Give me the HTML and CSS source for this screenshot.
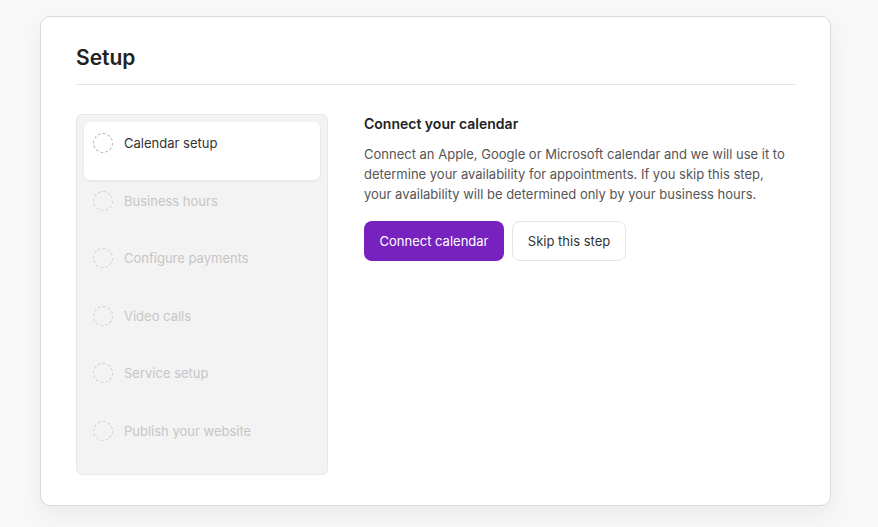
FILE: index.html
```html
<!DOCTYPE html>
<html>
<head>
<meta charset="utf-8">
<link rel="stylesheet" href="styles.css">
</head>
<body>
<div class="card">
  <h1 class="title">Setup</h1>
  <div class="content">
    <ul class="steps">
      <li class="step active"><span class="dot"></span><span>Calendar setup</span></li>
      <li class="step"><span class="dot"></span><span>Business hours</span></li>
      <li class="step"><span class="dot"></span><span>Configure payments</span></li>
      <li class="step"><span class="dot"></span><span>Video calls</span></li>
      <li class="step"><span class="dot"></span><span>Service setup</span></li>
      <li class="step"><span class="dot"></span><span>Publish your website</span></li>
    </ul>
    <div class="panel">
      <h2 class="panel-title">Connect your calendar</h2>
      <p class="panel-text">Connect an Apple, Google or Microsoft calendar and we will use it to determine your availability for appointments. If you skip this step, your availability will be determined only by your business hours.</p>
      <div class="actions">
        <button class="btn btn-primary">Connect calendar</button>
        <button class="btn btn-secondary">Skip this step</button>
      </div>
    </div>
  </div>
</div>
</body>
</html>
```
FILE: styles.css
```css
html, body {
  margin: 0;
  padding: 0;
}
body {
  background: #f8f8f8;
  font-family: Inter, "Noto Sans", sans-serif;
  color: #222;
  padding: 16px 47px 22px 40px;
  height: 527px;
  box-sizing: border-box;
}
.card {
  background: #fff;
  border: 1px solid #d9d9d9;
  border-radius: 10px;
  box-shadow: 0 10px 24px rgba(0,0,0,0.06);
  padding: 26px 35px 29px 35px;
  height: 490px;
  box-sizing: border-box;
}
.title {
  margin: 0;
  font-size: 21px;
  font-weight: 600;
  line-height: 30px;
  padding-bottom: 11px;
  border-bottom: 1px solid #e6e6e6;
  color: #222;
}
.content {
  display: flex;
  gap: 36px;
  margin-top: 29px;
}
.steps {
  list-style: none;
  margin: 0;
  padding: 7px;
  width: 252px;
  box-sizing: border-box;
  background: #f3f3f3;
  border: 1px solid #e8e8e8;
  border-radius: 6px;
}
.step {
  display: flex;
  align-items: flex-start;
  gap: 11px;
  height: 57.5px;
  box-sizing: border-box;
  padding: 11px 9px 0;
  font-size: 13px;
  line-height: 20px;
  color: #c6c6c6;
}
.step.active {
  background: #fff;
  border-radius: 6px;
  color: #333;
  box-shadow: 0 1px 3px rgba(0,0,0,0.08);
}
.dot {
  width: 20px;
  height: 20px;
  box-sizing: border-box;
  border: 1px dashed #cdcdcd;
  border-radius: 50%;
  flex: none;
}
.step.active .dot {
  border-color: #aaa;
}
.panel {
  flex: 1;
}
.panel-title {
  margin: 0;
  font-size: 14px;
  font-weight: 600;
  line-height: 20px;
  color: #222;
}
.panel-text {
  margin: 10px 0 0;
  max-width: 426px;
  font-size: 13px;
  line-height: 20px;
  color: #555;
}
.actions {
  display: flex;
  gap: 8px;
  margin-top: 17px;
}
.btn {
  font-family: inherit;
  font-size: 13px;
  height: 40px;
  border-radius: 8px;
  padding: 0 14px;
  cursor: pointer;
}
.btn-primary {
  background: #7722bf;
  color: #fff;
  border: none;
  width: 140px;
}
.btn-secondary {
  background: #fff;
  color: #333;
  border: 1px solid #e4e4e4;
  width: 114px;
}
```
